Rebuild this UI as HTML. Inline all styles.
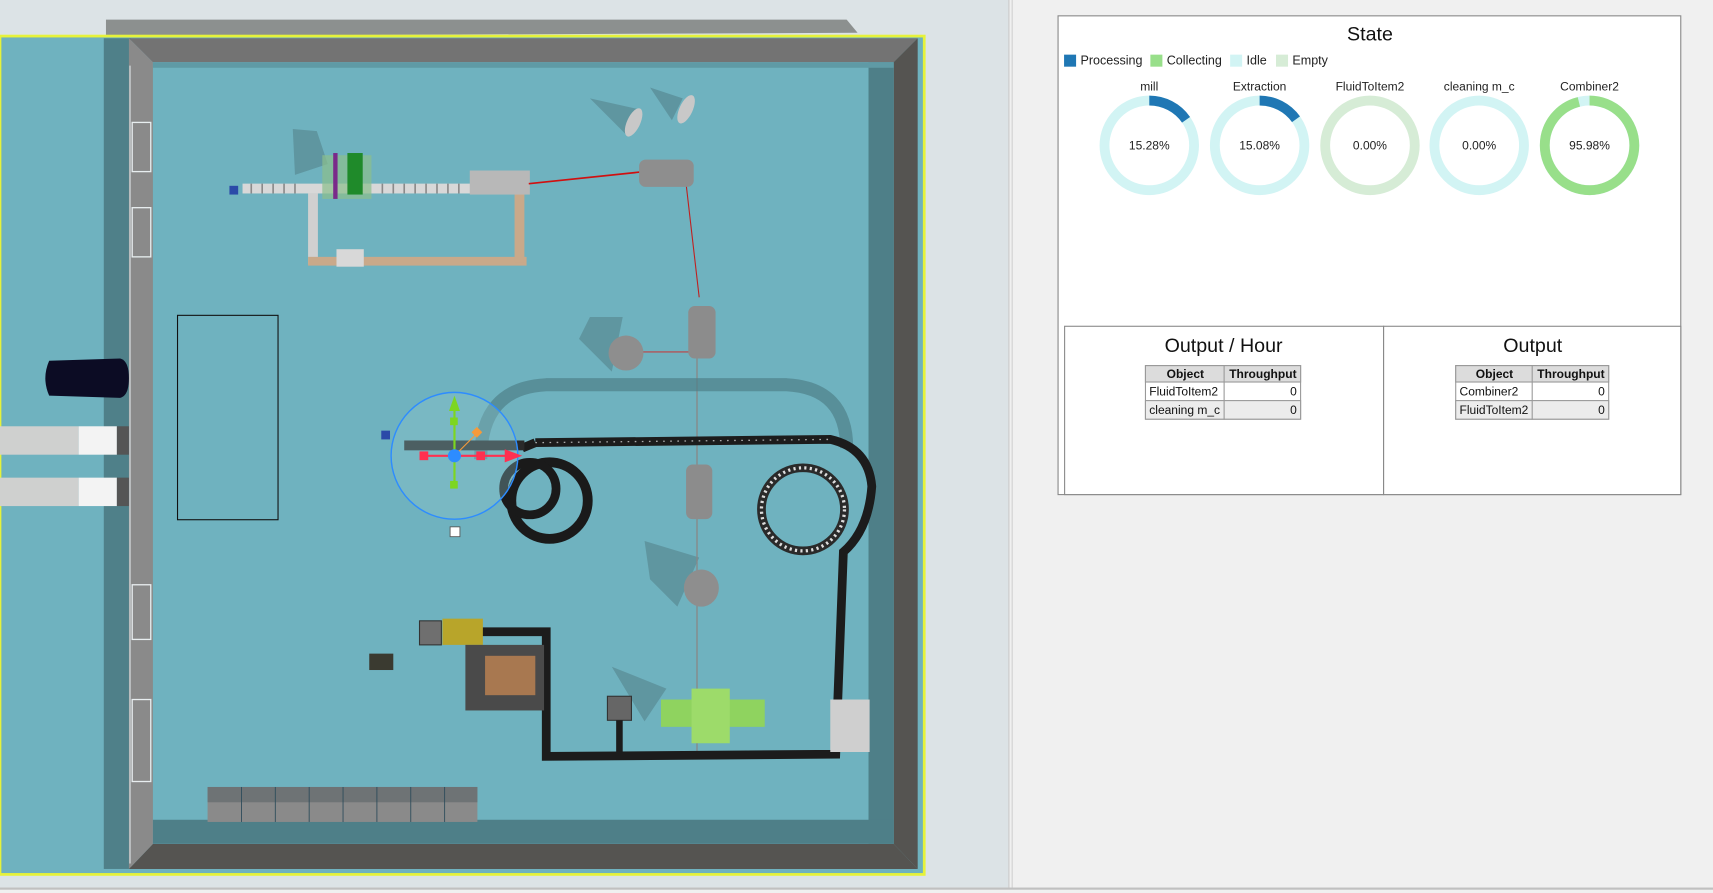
<!DOCTYPE html>
<html><head><meta charset="utf-8"><style>
html,body{margin:0;padding:0;width:1713px;height:893px;overflow:hidden;background:#f0f0f0}
svg{display:block}
text{font-family:"Liberation Sans",Arial,sans-serif}
</style></head><body>
<svg width="1713" height="893" viewBox="0 0 1568 817" preserveAspectRatio="none">
<rect x="0" y="0" width="1568" height="817" fill="#f0f0f0"/>
<!-- 3D view -->
<rect x="0" y="0" width="923" height="812" fill="#dce3e6"/>
<rect x="923" y="0" width="1" height="812" fill="#c8c8c8"/>
<rect x="926" y="0" width="1" height="812" fill="#d0d0d0"/>
<rect x="0" y="812" width="1568" height="2" fill="#c0c0c0"/>
<!-- top wall shadow outside -->
<polygon points="97,18 775,18 785,30 97,33" fill="#8c908f"/>
<!-- yellow boundary -->
<rect x="0" y="33" width="846" height="767" fill="#6fb2bf" stroke="#e6f23a" stroke-width="2.5"/>
<!-- outside shadow strip left -->
<rect x="95" y="35" width="25" height="760" fill="#4f8089"/>
<!-- walls -->
<polygon points="118,35 840,35 818,57 140,57" fill="#737373"/>
<polygon points="840,35 840,795 818,772 818,57" fill="#555451"/>
<polygon points="118,795 840,795 818,772 140,772" fill="#555451"/>
<polygon points="118,35 140,57 140,772 118,795" fill="#8a8a8a"/>
<!-- inner floor -->
<rect x="140" y="57" width="678" height="715" fill="#6fb2bf"/>
<rect x="795" y="57" width="23" height="715" fill="#4e7f88"/>
<rect x="140" y="750" width="678" height="22" fill="#4e7f88"/>
<rect x="140" y="57" width="678" height="5" fill="#5f9aa5"/>
<!-- windows on left wall -->
<g fill="none" stroke="#e8eef0" stroke-width="1.2">
<rect x="121" y="112" width="17" height="45"/><rect x="121" y="190" width="17" height="45"/>
<rect x="121" y="535" width="17" height="50"/><rect x="121" y="640" width="17" height="75"/>
</g>
<line x1="119" y1="60" x2="119" y2="790" stroke="#e0e6e8" stroke-width="1"/>
<!-- car & trucks -->
<path d="M45,330 L110,328 Q118,330 118,346 Q118,362 110,364 L45,362 Q38,346 45,330Z" fill="#0c0c24"/>
<rect x="0" y="390" width="72" height="26" fill="#cfd0cf"/><rect x="72" y="390" width="35" height="26" fill="#f3f3f3"/><rect x="107" y="390" width="11" height="26" fill="#555"/>
<rect x="0" y="437" width="72" height="26" fill="#cfd0cf"/><rect x="72" y="437" width="35" height="26" fill="#f3f3f3"/><rect x="107" y="437" width="11" height="26" fill="#555"/>
<!-- rectangle outline -->
<rect x="162.5" y="288.5" width="92" height="187" fill="none" stroke="#111" stroke-width="1"/>
<!-- top-left conveyor -->
<g fill="#5b8f99" opacity="0.8">
<polygon points="268,118 290,120 300,150 270,160"/><polygon points="540,90 585,100 575,125"/><polygon points="595,80 625,90 615,110"/>
<polygon points="540,290 570,290 560,340 530,310"/><polygon points="590,495 640,510 620,555 595,530"/><polygon points="560,610 610,630 590,660"/>
</g>
<rect x="222" y="168" width="258" height="9" fill="#d8d8d8"/>
<g stroke="#8a8a8a" stroke-width="1.5">
<line x1="230" y1="168" x2="230" y2="177"/><line x1="240" y1="168" x2="240" y2="177"/><line x1="250" y1="168" x2="250" y2="177"/><line x1="260" y1="168" x2="260" y2="177"/><line x1="270" y1="168" x2="270" y2="177"/><line x1="350" y1="168" x2="350" y2="177"/><line x1="360" y1="168" x2="360" y2="177"/><line x1="370" y1="168" x2="370" y2="177"/><line x1="380" y1="168" x2="380" y2="177"/><line x1="390" y1="168" x2="390" y2="177"/><line x1="400" y1="168" x2="400" y2="177"/><line x1="410" y1="168" x2="410" y2="177"/><line x1="420" y1="168" x2="420" y2="177"/>
</g>
<rect x="282" y="177" width="9" height="65" fill="#d0d0d0"/>
<rect x="282" y="235" width="200" height="8" fill="#c9a98a"/>
<rect x="471" y="170" width="9" height="70" fill="#c9a98a"/>
<rect x="210" y="170" width="8" height="8" fill="#2b4aa8"/>
<rect x="295" y="142" width="45" height="40" fill="#8bbf8b" opacity="0.7"/>
<rect x="318" y="140" width="14" height="38" fill="#1f8a2a"/><rect x="305" y="140" width="4" height="42" fill="#7a2a8a"/>
<rect x="430" y="156" width="55" height="22" fill="#b8b8b8"/>
<rect x="308" y="228" width="25" height="16" fill="#d8d8d8"/>
<!-- red lines -->
<line x1="484" y1="168" x2="590" y2="157" stroke="#d01010" stroke-width="1.5"/>
<line x1="628" y1="168" x2="640" y2="272" stroke="#c02020" stroke-width="1"/>
<line x1="588" y1="322" x2="635" y2="322" stroke="#c04040" stroke-width="1"/>
<line x1="638" y1="322" x2="638" y2="690" stroke="#888" stroke-width="1.2"/>
<!-- tanks -->
<rect x="585" y="146" width="50" height="25" rx="6" fill="#8e8e8e"/>
<ellipse cx="580" cy="112" rx="6" ry="14" fill="#c8c8c8" transform="rotate(25 580 112)"/>
<ellipse cx="628" cy="100" rx="6" ry="14" fill="#c8c8c8" transform="rotate(25 628 100)"/>
<rect x="630" y="280" width="25" height="48" rx="6" fill="#8c8c8c"/>
<ellipse cx="573" cy="323" rx="16" ry="16" fill="#8e8e8e"/>
<rect x="628" y="425" width="24" height="50" rx="6" fill="#8c8c8c"/>
<ellipse cx="642" cy="538" rx="16" ry="17" fill="#8e8e8e"/>
<!-- conveyor loop shadow -->
<path d="M440,420 Q440,355 500,352 L720,352 Q775,355 775,410" fill="none" stroke="#4f8089" stroke-width="12" opacity="0.7"/>
<!-- main black conveyor -->
<path d="M490,405 L760,402 Q795,410 798,445 Q795,485 772,505 L765,690 L500,692 L500,578 L440,578" fill="none" stroke="#1c1c1c" stroke-width="8"/>
<path d="M490,405 L760,402" fill="none" stroke="#aaa" stroke-width="1.2" stroke-dasharray="1.5 5"/>
<circle cx="503" cy="458" r="35" fill="none" stroke="#1a1a1a" stroke-width="9"/>
<circle cx="485" cy="447" r="24" fill="none" stroke="#1a1a1a" stroke-width="8"/>
<circle cx="735" cy="466" r="38" fill="none" stroke="#2a2a2a" stroke-width="8"/>
<circle cx="735" cy="466" r="38" fill="none" stroke="#ddd" stroke-width="3" stroke-dasharray="2 3"/>
<path d="M478,410 L490,405" stroke="#1c1c1c" stroke-width="8"/>
<!-- small conveyor with gizmo -->
<rect x="370" y="403" width="110" height="9" fill="#2a2a2a"/>
<rect x="349" y="394" width="8" height="8" fill="#2b4aa8"/>
<circle cx="416" cy="417" r="58" fill="#8cc2cc" fill-opacity="0.35" stroke="#2d8cff" stroke-width="1.3"/>
<line x1="416" y1="370" x2="416" y2="445" stroke="#7dd620" stroke-width="2"/>
<polygon points="411,376 421,376 416,362" fill="#7dd620"/>
<rect x="412" y="440" width="7" height="7" fill="#7dd620"/><rect x="412" y="382" width="7" height="7" fill="#7dd620"/>
<line x1="388" y1="417" x2="470" y2="417" stroke="#ff3050" stroke-width="2"/>
<polygon points="462,411 462,423 478,417" fill="#ff3050"/>
<rect x="384" y="413" width="8" height="8" fill="#ff3050"/><rect x="436" y="413" width="8" height="8" fill="#ff3050"/>
<line x1="416" y1="417" x2="437" y2="396" stroke="#f59a3a" stroke-width="1"/>
<rect x="433" y="392" width="7" height="7" fill="#f59a3a" transform="rotate(45 436.5 395.5)"/>
<circle cx="416" cy="417" r="6" fill="#2d8cff"/>
<rect x="412" y="482" width="9" height="9" fill="#fff" stroke="#555" stroke-width="0.8"/>
<!-- lower area -->
<rect x="384" y="568" width="20" height="22" fill="#6f6f6f" stroke="#333"/>
<rect x="405" y="566" width="37" height="24" fill="#b8a52a"/>
<rect x="426" y="590" width="72" height="60" fill="#4a4a4a"/>
<rect x="444" y="600" width="46" height="36" fill="#a87850"/>
<rect x="338" y="598" width="22" height="15" fill="#3a3a30"/>
<rect x="556" y="637" width="22" height="22" fill="#666" stroke="#333"/>
<line x1="567" y1="659" x2="567" y2="690" stroke="#1c1c1c" stroke-width="6"/>
<rect x="605" y="640" width="95" height="25" fill="#8fd35f"/>
<rect x="633" y="630" width="35" height="50" fill="#9ddb6a"/>
<rect x="760" y="640" width="36" height="48" fill="#cfcfcf"/>
<!-- storage racks -->
<rect x="190" y="720" width="247" height="32" fill="#8a8a8a"/>
<rect x="190" y="720" width="247" height="14" fill="#6e7375"/>
<g stroke="#2c4b5a" stroke-width="0.8"><line x1="221" y1="720" x2="221" y2="752"/><line x1="252" y1="720" x2="252" y2="752"/><line x1="283" y1="720" x2="283" y2="752"/><line x1="314" y1="720" x2="314" y2="752"/><line x1="345" y1="720" x2="345" y2="752"/><line x1="376" y1="720" x2="376" y2="752"/><line x1="407" y1="720" x2="407" y2="752"/></g>
<!-- Dashboard -->
<rect x="968.5" y="14.5" width="570" height="438" fill="#fff" stroke="#888" stroke-width="1"/>
<text x="1254" y="37" font-size="18" text-anchor="middle" fill="#111">State</text>
<g font-size="11.5" fill="#222">
<rect x="974" y="50" width="11" height="11" fill="#1f77b4"/><text x="989" y="59">Processing</text>
<rect x="1053" y="50" width="11" height="11" fill="#98df8a"/><text x="1068" y="59">Collecting</text>
<rect x="1126" y="50" width="11" height="11" fill="#d2f4f4"/><text x="1141" y="59">Idle</text>
<rect x="1168" y="50" width="11" height="11" fill="#d6ecd6"/><text x="1183" y="59">Empty</text>
</g>
<g font-size="11" fill="#222" text-anchor="middle">
<text x="1052" y="83">mill</text><text x="1153" y="83">Extraction</text><text x="1254" y="83">FluidToItem2</text><text x="1354" y="83">cleaning m_c</text><text x="1455" y="83">Combiner2</text>
<text x="1052" y="137">15.28%</text><text x="1153" y="137">15.08%</text><text x="1254" y="137">0.00%</text><text x="1354" y="137">0.00%</text><text x="1455" y="137">95.98%</text>
</g>
<g fill="none" stroke-width="9">
<circle cx="1052" cy="133" r="41" stroke="#d2f4f4"/>
<circle cx="1052" cy="133" r="41" stroke="#1f77b4" stroke-dasharray="39.4 300" transform="rotate(-90 1052 133)"/>
<circle cx="1153" cy="133" r="41" stroke="#d2f4f4"/>
<circle cx="1153" cy="133" r="41" stroke="#1f77b4" stroke-dasharray="38.8 300" transform="rotate(-90 1153 133)"/>
<circle cx="1254" cy="133" r="41" stroke="#d6ecd6"/>
<circle cx="1354" cy="133" r="41" stroke="#d2f4f4"/>
<circle cx="1455" cy="133" r="41" stroke="#d2f4f4"/>
<circle cx="1455" cy="133" r="41" stroke="#98df8a" stroke-dasharray="247.3 300" transform="rotate(-90 1455 133)"/>
</g>
<rect x="974.5" y="298.5" width="292" height="154" fill="#fff" stroke="#888"/>
<rect x="1266.5" y="298.5" width="272" height="154" fill="#fff" stroke="#888"/>
<text x="1120" y="322" font-size="18" text-anchor="middle" fill="#111">Output / Hour</text>
<text x="1403" y="322" font-size="18" text-anchor="middle" fill="#111">Output</text>
<g font-size="11" fill="#111" stroke="none">
<rect x="1048.5" y="334.5" width="142" height="49" fill="#fff" stroke="#999"/>
<rect x="1048.5" y="334.5" width="142" height="15" fill="#dcdcdc" stroke="#999"/>
<rect x="1048.5" y="366.5" width="142" height="17" fill="#ececec" stroke="#999"/>
<line x1="1120.5" y1="334" x2="1120.5" y2="384" stroke="#999"/>
<text x="1085" y="346" text-anchor="middle" font-weight="bold">Object</text><text x="1156" y="346" text-anchor="middle" font-weight="bold">Throughput</text>
<text x="1052" y="362">FluidToItem2</text><text x="1187" y="362" text-anchor="end">0</text>
<text x="1052" y="379">cleaning m_c</text><text x="1187" y="379" text-anchor="end">0</text>
<rect x="1332.5" y="334.5" width="140" height="49" fill="#fff" stroke="#999"/>
<rect x="1332.5" y="334.5" width="140" height="15" fill="#dcdcdc" stroke="#999"/>
<rect x="1332.5" y="366.5" width="140" height="17" fill="#ececec" stroke="#999"/>
<line x1="1402.5" y1="334" x2="1402.5" y2="384" stroke="#999"/>
<text x="1368" y="346" text-anchor="middle" font-weight="bold">Object</text><text x="1438" y="346" text-anchor="middle" font-weight="bold">Throughput</text>
<text x="1336" y="362">Combiner2</text><text x="1469" y="362" text-anchor="end">0</text>
<text x="1336" y="379">FluidToItem2</text><text x="1469" y="379" text-anchor="end">0</text>
</g>
</svg>
</body></html>
